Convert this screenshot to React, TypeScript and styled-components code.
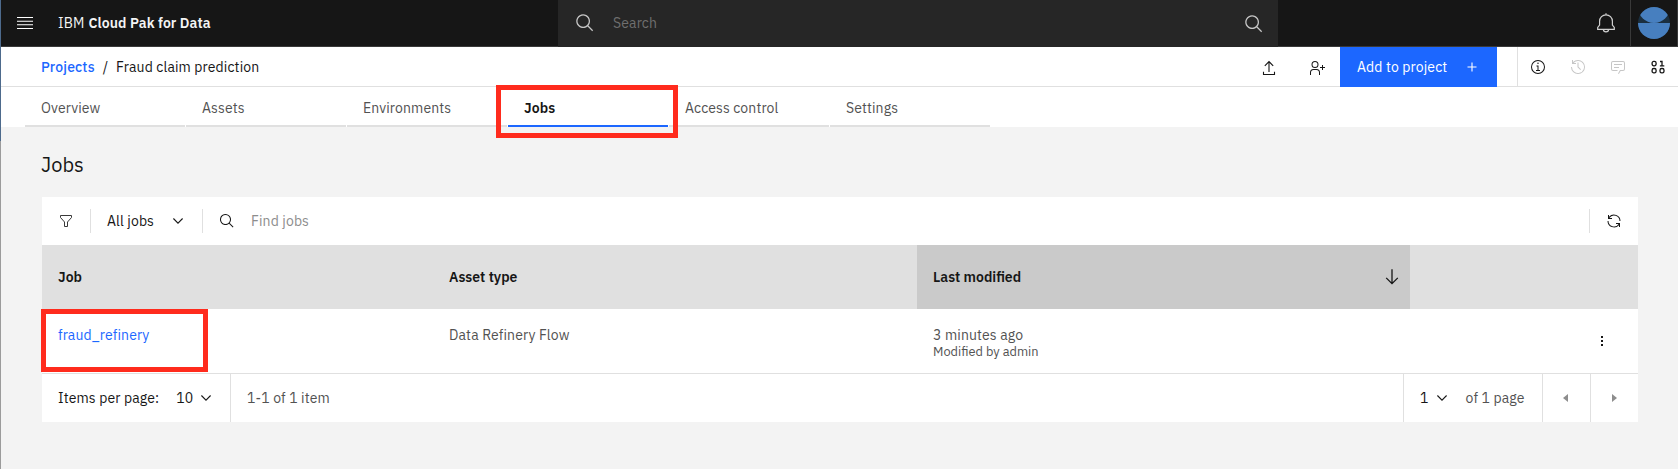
import React from "react";
import styled, { createGlobalStyle, css } from "styled-components";

const GlobalStyle = createGlobalStyle`
  *, *::before, *::after { box-sizing: border-box; }
  body {
    margin: 0;
    background: #f3f3f3;
    color: #161616;
    font: 400 14px/20px "IBM Plex Sans", Roboto, "Liberation Sans", sans-serif;
  }
  svg { display: block; flex: none; }
`;

const Page = styled.div`
  display: flex;
  height: 469px;
`;

const WindowEdge = styled.div`
  flex: none;
  width: 1px;
  background: linear-gradient(#4d6a8c 0 141px, #9b9b9b 141px);
`;

const Main = styled.div`
  flex: 1;
  min-width: 0;
`;

const Label = styled.span<{ $track?: number; $weight?: number; $color?: string }>`
  white-space: nowrap;
  letter-spacing: ${(p) => p.$track ?? 0.12}px;
  font-weight: ${(p) => p.$weight ?? 400};
  color: ${(p) => p.$color ?? "inherit"};
`;

/* Top bar */

const TopBar = styled.header`
  display: grid;
  grid-template-columns: 557px 720px 1fr;
  height: 47px;
  background: linear-gradient(#161616 46px, #393939 46px);
  color: #f4f4f4;
`;

const Brand = styled.div`
  display: flex;
  align-items: center;
  padding: 0 0 1px 16px;
`;

const BrandName = styled.div`
  display: flex;
  gap: 4px;
  margin-left: 25px;
`;

const GlobalSearch = styled.div`
  display: flex;
  align-items: center;
  padding: 0 14px 1px 17px;
  background: #262626;
  color: #c6c6c6;

  ${Label} {
    flex: 1;
    margin-left: 18px;
  }
`;

const LowerIcon = styled.span`
  margin-top: 2px;
`;

const Account = styled.div`
  display: flex;
  justify-content: flex-end;
  height: 46px;
`;

const BellButton = styled.div`
  display: flex;
  align-items: center;
  padding-right: 14px;
`;

const AvatarButton = styled.div`
  display: flex;
  justify-content: center;
  align-items: center;
  width: 48px;
  border: solid #393939;
  border-width: 0 1px;
`;

/* Breadcrumb bar */

const ProjectBar = styled.div`
  display: flex;
  height: 40px;
  background: linear-gradient(#fff 39px, #e0e0e0 39px);
`;

const Breadcrumb = styled.nav`
  display: flex;
  flex: 1;
  align-items: center;
  padding: 0 0 0 40px;
`;

const Slash = styled.span`
  margin: 0 8px;
`;

const ProjectActions = styled.div`
  display: flex;
  align-items: center;
  gap: 32px;
  padding: 2px 15px 0 0;
`;

const AddButton = styled.button`
  display: flex;
  align-items: center;
  justify-content: space-between;
  width: 157px;
  padding: 0 20px 0 17px;
  border: 0;
  background: #1c67ff;
  color: #fff;
  font: inherit;
`;

const PanelToggles = styled.div`
  display: flex;
  height: 39px;
  margin-left: 20px;
  border-left: 1px solid #e0e0e0;
`;

const PanelToggle = styled.div<{ $disabled?: boolean }>`
  display: flex;
  align-items: center;
  justify-content: center;
  width: 40px;
  padding-top: 1px;
  color: ${(p) => (p.$disabled ? "#c6c6c6" : "#161616")};
`;

/* Tabs */

const Tabs = styled.div`
  display: flex;
  gap: 1px;
  height: 40px;
  padding-left: 24px;
  background: #fff;
`;

const Tab = styled.div<{ $active?: boolean }>`
  position: relative;
  width: 160px;
  padding: 11px 16px 0;
  border-bottom: 2px solid #e0e0e0;
  color: #525252;
  ${(p) =>
    p.$active &&
    css`
      border-color: #1c67ff;
      color: #161616;
    `}
`;

const Marker = styled.div<{ $left: number; $top: number; $w: number; $h: number }>`
  position: absolute;
  z-index: 1;
  left: ${(p) => p.$left}px;
  top: ${(p) => p.$top}px;
  width: ${(p) => p.$w}px;
  height: ${(p) => p.$h}px;
  border: 5px solid #ff2b1d;
  pointer-events: none;
`;

/* Content */

const Content = styled.main`
  padding: 24px 40px 0 41px;
`;

const Title = styled.h1`
  margin: 0 0 18px -1px;
  font-size: 20px;
  font-weight: 400;
  line-height: 28px;
`;

const Toolbar = styled.div`
  display: flex;
  align-items: center;
  height: 48px;
  background: #fff;
`;

const Rule = styled.div`
  width: 1px;
  height: 24px;
  background: #e0e0e0;
`;

const FilterButton = styled.div`
  display: flex;
  justify-content: center;
  width: 48px;
`;

const JobFilter = styled.div`
  display: flex;
  align-items: center;
  justify-content: space-between;
  width: 111px;
  padding: 0 19px 0 16px;
`;

const FindBox = styled.div`
  display: flex;
  flex: 1;
  align-items: center;
  gap: 16px;
  padding-left: 16px;
`;

const RefreshButton = styled.div`
  display: flex;
  justify-content: center;
  width: 48px;
`;

const Row = styled.div`
  position: relative;
  display: grid;
  grid-template-columns: 391px 484px 493px 228px;
`;

const HeadRow = styled(Row)`
  height: 64px;
  background: #e0e0e0;
`;

const BodyRow = styled(Row)`
  height: 65px;
  border-bottom: 1px solid #e0e0e0;
  background: #fff;
  color: #525252;
`;

const HeadCell = styled.div<{ $sorted?: boolean }>`
  display: flex;
  align-items: center;
  justify-content: space-between;
  padding: 0 11px 0 16px;
  background: ${(p) => (p.$sorted ? "#cacaca" : "transparent")};
`;

const Cell = styled.div`
  display: flex;
  flex-direction: column;
  padding: 16px 16px 0;
`;

const Detail = styled.div`
  margin-top: -3px;
  font-size: 12.8px;
`;

const MenuCell = styled.div`
  display: flex;
  align-items: center;
  justify-content: flex-end;
  padding-right: 28px;
`;

const Pagination = styled.div`
  display: flex;
  height: 48px;
  background: #fff;
`;

const PageSize = styled.div`
  display: flex;
  align-items: center;
  width: 189px;
  padding-left: 16px;
  border-right: 1px solid #e0e0e0;
`;

const SizeValue = styled.div`
  display: flex;
  align-items: center;
  gap: 8px;
  margin-left: 17px;
`;

const Range = styled.div`
  display: flex;
  flex: 1;
  align-items: center;
  padding-left: 16px;
`;

const PageSelect = styled.div`
  display: flex;
  align-items: center;
  width: 139px;
  padding-left: 16px;
  border-left: 1px solid #e0e0e0;

  svg { margin: 0 19px 0 8px; }
`;

const PageArrow = styled.div<{ $back?: boolean }>`
  display: flex;
  align-items: center;
  justify-content: center;
  width: 48px;
  padding-right: ${(p) => (p.$back ? 2 : 0)}px;
  border-left: 1px solid #e0e0e0;
`;

/* Icons */

const MenuIcon = () => (
  <svg width="16" height="12" fill="#fff">
    <path d="M0 0h16v1H0zM0 3.67h16v1H0zM0 7.33h16v1H0zM0 11h16v1H0z" />
  </svg>
);

const SearchIcon = ({ size = 20 }: { size?: number }) => (
  <svg width={size} height={size} viewBox="0 0 32 32" fill="currentColor">
    <path d="M29 27.586l-7.552-7.552a11.018 11.018 0 1 0-1.414 1.414L27.586 29zM4 13a9 9 0 1 1 9 9 9.01 9.01 0 0 1-9-9z" />
  </svg>
);

const BellIcon = () => (
  <svg width="20" height="20" fill="none" stroke="#d0d0d0" strokeWidth="1.2">
    <path d="M10 .2v1.6M3.6 12V8.2a6.4 6.4 0 0 1 12.8 0V12l1.9 2.5v1.9H1.7v-1.9zM7.4 16.5a2.6 2.3 0 0 0 5.2 0" />
  </svg>
);

const Avatar = () => (
  <svg width="32" height="32">
    <clipPath id="avatar-disc"><circle cx="16" cy="16" r="16" /></clipPath>
    <g clipPath="url(#avatar-disc)">
      <rect width="32" height="32" fill="#1b2f3f" />
      <circle cx="16" r="16" fill="#477fbf" />
      <rect y="16" width="32" height="16" fill="#477fbf" />
    </g>
  </svg>
);

const ExportIcon = () => (
  <svg width="16" height="16" fill="none" stroke="#161616" strokeWidth="1.1">
    <path d="M8 1.6v10.4M3.8 5.8L8 1.6l4.2 4.2M2.5 11.8v2.7h11v-2.7" />
  </svg>
);

const AddUserIcon = () => (
  <svg width="16" height="16" viewBox="0 0 32 32" fill="#161616">
    <path d="M32 14h-4v-4h-2v4h-4v2h4v4h2v-4h4zM12 4a5 5 0 1 1-5 5 5 5 0 0 1 5-5m0-2a7 7 0 1 0 7 7 7 7 0 0 0-7-7zM22 30h-2v-5a5 5 0 0 0-5-5H9a5 5 0 0 0-5 5v5H2v-5a7 7 0 0 1 7-7h6a7 7 0 0 1 7 7z" />
  </svg>
);

const PlusIcon = () => (
  <svg width="10" height="10" stroke="#fff" strokeWidth="1.1">
    <path d="M5 .5v9M.5 5h9" />
  </svg>
);

const InfoIcon = () => (
  <svg width="16" height="16" viewBox="0 0 32 32" fill="currentColor">
    <path d="M17 22v-9h-4v2h2v7h-3v2h8v-2zM16 7a1.5 1.5 0 1 0 1.5 1.5A1.5 1.5 0 0 0 16 7z" />
    <path d="M16 30a14 14 0 1 1 14-14 14 14 0 0 1-14 14zm0-26a12 12 0 1 0 12 12A12 12 0 0 0 16 4z" />
  </svg>
);

const HistoryIcon = () => (
  <svg width="16" height="16" viewBox="0 0 32 32" fill="currentColor">
    <path d="M20.59 22L15 16.41V7h2v8.58l5 5.01L20.59 22z" />
    <path d="M16 2A13.94 13.94 0 0 0 6 6.23V2H4v8h8V8H7.08A12 12 0 1 1 4 16H2A14 14 0 1 0 16 2z" />
  </svg>
);

const ChatIcon = () => (
  <svg width="16" height="16" viewBox="0 0 32 32" fill="currentColor">
    <path d="M17.74 30L16 29l4-7h6a2 2 0 0 0 2-2V8a2 2 0 0 0-2-2H6a2 2 0 0 0-2 2v12a2 2 0 0 0 2 2h9v2H6a4 4 0 0 1-4-4V8a4 4 0 0 1 4-4h20a4 4 0 0 1 4 4v12a4 4 0 0 1-4 4h-4.84z" />
    <path d="M8 10h16v2H8zM8 16h10v2H8z" />
  </svg>
);

const DataIcon = () => (
  <svg width="16" height="16" fill="none" stroke="currentColor" strokeWidth="1.3">
    <rect x="2.1" y="2.4" width="4" height="4.4" rx="1.7" />
    <rect x="2.1" y="9.5" width="4" height="4.4" rx="1.7" />
    <rect x="10" y="9.5" width="4" height="4.4" rx="1.7" />
    <path d="M10 2.5h2v4.3M9.9 6.8h4.4" />
  </svg>
);

const FilterIcon = () => (
  <svg width="16" height="16" fill="none" stroke="#393939" strokeWidth="1">
    <path d="M2.5 2.5h11v2L9.5 9v4.5h-3V9l-4-4.5z" />
  </svg>
);

const Chevron = () => (
  <svg width="10" height="6" fill="none" stroke="#161616" strokeWidth="1.1">
    <path d="M.4 .5L5 5.1 9.6 .5" />
  </svg>
);

const RefreshIcon = () => (
  <svg width="16" height="16" viewBox="0 0 32 32" fill="#161616">
    <path d="M12 10H6.78A11 11 0 0 1 27 16h2A13 13 0 0 0 6 7.68V4H4v8h8zM20 22h5.22A11 11 0 0 1 5 16H3a13 13 0 0 0 23 8.32V28h2v-8h-8z" />
  </svg>
);

const ArrowDown = () => (
  <svg width="14" height="16" fill="none" stroke="#161616" strokeWidth="1.3">
    <path d="M7 .3v14.3M1.2 8.9L7 14.7l5.8-5.8" />
  </svg>
);

const DotsIcon = () => (
  <svg width="16" height="10" fill="#161616">
    <path d="M7 0h2v2H7zM7 4h2v2H7zM7 8h2v2H7z" />
  </svg>
);

const Triangle = ({ flip }: { flip?: boolean }) => (
  <svg width="5" height="8" fill="#8d8d8d">
    <path d={flip ? "M0 0v8l5-4z" : "M5 0v8L0 4z"} />
  </svg>
);

const tabs = [
  { name: "Overview" },
  { name: "Assets" },
  { name: "Environments" },
  { name: "Jobs", active: true },
  { name: "Access control" },
  { name: "Settings" },
];

export default function App() {
  return (
    <Page>
      <GlobalStyle />
      <WindowEdge />
      <Main>
        <TopBar>
          <Brand>
            <MenuIcon />
            <BrandName>
              <Label>IBM</Label>
              <Label $track={0.08} $weight={600}>Cloud Pak for Data</Label>
            </BrandName>
          </Brand>
          <GlobalSearch>
            <SearchIcon />
            <Label $color="#6f6f6f">Search</Label>
            <LowerIcon><SearchIcon /></LowerIcon>
          </GlobalSearch>
          <Account>
            <BellButton><BellIcon /></BellButton>
            <AvatarButton><Avatar /></AvatarButton>
          </Account>
        </TopBar>

        <ProjectBar>
          <Breadcrumb>
            <Label $track={0.16} $weight={500} $color="#1c67ff">Projects</Label>
            <Slash>/</Slash>
            <Label>Fraud claim prediction</Label>
          </Breadcrumb>
          <ProjectActions>
            <ExportIcon />
            <AddUserIcon />
          </ProjectActions>
          <AddButton>
            <Label>Add to project</Label>
            <PlusIcon />
          </AddButton>
          <PanelToggles>
            <PanelToggle><InfoIcon /></PanelToggle>
            <PanelToggle $disabled><HistoryIcon /></PanelToggle>
            <PanelToggle $disabled><ChatIcon /></PanelToggle>
            <PanelToggle><DataIcon /></PanelToggle>
          </PanelToggles>
        </ProjectBar>

        <Tabs>
          {tabs.map((t) => (
            <Tab key={t.name} $active={t.active}>
              <Label $weight={t.active ? 600 : 400}>{t.name}</Label>
              {t.active && <Marker $left={-12} $top={-2} $w={182} $h={53} />}
            </Tab>
          ))}
        </Tabs>

        <Content>
          <Title>Jobs</Title>
          <Toolbar>
            <FilterButton><FilterIcon /></FilterButton>
            <Rule />
            <JobFilter>
              <Label>All jobs</Label>
              <Chevron />
            </JobFilter>
            <Rule />
            <FindBox>
              <SearchIcon size={16} />
              <Label $color="#8d8d8d">Find jobs</Label>
            </FindBox>
            <Rule />
            <RefreshButton><RefreshIcon /></RefreshButton>
          </Toolbar>

          <HeadRow>
            <HeadCell><Label $track={0} $weight={600}>Job</Label></HeadCell>
            <HeadCell><Label $track={0} $weight={600}>Asset type</Label></HeadCell>
            <HeadCell $sorted>
              <Label $track={0} $weight={600}>Last modified</Label>
              <ArrowDown />
            </HeadCell>
            <HeadCell />
          </HeadRow>

          <BodyRow>
            <Marker $left={-1} $top={0} $w={167} $h={63} />
            <Cell><Label $color="#1c67ff">fraud_refinery</Label></Cell>
            <Cell><Label>Data Refinery Flow</Label></Cell>
            <Cell>
              <Label>3 minutes ago</Label>
              <Detail><Label $track={0}>Modified by admin</Label></Detail>
            </Cell>
            <MenuCell><DotsIcon /></MenuCell>
          </BodyRow>

          <Pagination>
            <PageSize>
              <Label>Items per page:</Label>
              <SizeValue>
                <Label>10</Label>
                <Chevron />
              </SizeValue>
            </PageSize>
            <Range><Label $color="#525252">1-1 of 1 item</Label></Range>
            <PageSelect>
              <Label>1</Label>
              <Chevron />
              <Label $color="#525252">of 1 page</Label>
            </PageSelect>
            <PageArrow $back><Triangle /></PageArrow>
            <PageArrow><Triangle flip /></PageArrow>
          </Pagination>
        </Content>
      </Main>
    </Page>
  );
}
